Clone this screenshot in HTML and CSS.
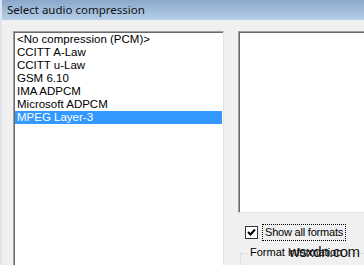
FILE: index.html
```html
<!DOCTYPE html>
<html lang="en">
<head>
  <meta charset="UTF-8">
  <title>Select audio compression</title>
  <link rel="stylesheet" href="styles.css">
</head>
<body>
  <div class="window">
    <div class="titlebar">Select audio compression</div>
    <div class="content">
      <ul class="codec-list">
        <li>&lt;No compression (PCM)&gt;</li>
        <li>CCITT A-Law</li>
        <li>CCITT u-Law</li>
        <li>GSM 6.10</li>
        <li>IMA ADPCM</li>
        <li>Microsoft ADPCM</li>
        <li class="selected">MPEG Layer-3</li>
      </ul>
      <div class="right-col">
        <div class="format-box"></div>
        <label class="check-row">
          <span class="checkbox">
            <svg width="9" height="9" viewBox="0 0 9 9"><path d="M1 4 L3.5 6.5 L8 1.5" fill="none" stroke="#000" stroke-width="2"/></svg>
          </span>
          <span class="check-label">Show all formats</span>
        </label>
        <div class="group">
          <span class="group-title">Format information</span>
        </div>
      </div>
    </div>
    <div class="watermark">wsxdn.com</div>
  </div>
</body>
</html>
```

FILE: styles.css
```css
body {
  margin: 0;
  background: #f0f0f0;
  font-family: "Liberation Sans", Arial, sans-serif;
  font-size: 11px;
  overflow: hidden;
}

.window {
  position: relative;
  width: 364px;
  height: 265px;
  border-left: 2px solid #dde4ec;
  box-sizing: border-box;
  overflow: hidden;
}

.titlebar {
  height: 20px;
  padding-left: 5px;
  line-height: 19px;
  font-family: "Noto Sans", sans-serif;
  font-size: 11.5px;
  color: #111;
  background: linear-gradient(#8ba8cb, #b6cfe9);
}

.content {
  display: flex;
  padding: 11px 0 0 11px;
  gap: 14px;
}

.codec-list {
  list-style: none;
  margin: 0;
  padding: 1px 1px 0 1px;
  width: 207px;
  height: 233px;
  background: #fff;
  border: 1px solid;
  border-bottom: none;
  border-color: #a0a0a0 #e3e3e3 #e3e3e3 #a0a0a0;
  box-shadow: inset 1px 1px #696969;
  color: #000;
  font-size: 11.5px;
}

.codec-list li {
  height: 13px;
  line-height: 13px;
  padding-left: 2px;
  white-space: nowrap;
}

.codec-list li.selected {
  background: #3399ff;
  color: #fff;
}

.right-col {
  flex: 1;
  display: flex;
  flex-direction: column;
}

.format-box {
  height: 180px;
  background: #fff;
  border: 1px solid;
  border-right: none;
  border-color: #a0a0a0 #e3e3e3 #e3e3e3 #a0a0a0;
  box-shadow: inset 1px 1px #696969;
}

.check-row {
  display: flex;
  align-items: center;
  gap: 4px;
  margin: 11px 0 0 7px;
}

.checkbox {
  width: 11px;
  height: 11px;
  border: 1px solid #333;
  background: #fff;
  display: flex;
  align-items: center;
  justify-content: center;
}

.check-label {
  font-size: 11px;
  letter-spacing: -0.2px;
  padding: 1px 2px;
  border: 1px dotted #000;
  line-height: 13px;
}

.group {
  margin: 12px 0 0 2px;
  height: 14px;
  border-top: 1px solid #d5dfe5;
  border-left: 1px solid #d5dfe5;
  position: relative;
}

.group-title {
  position: absolute;
  top: -8px;
  left: 7px;
  padding: 0 2px;
  background: #f0f0f0;
  font-size: 11px;
}

.watermark {
  position: absolute;
  left: 287px;
  top: 243px;
  font-family: "Liberation Sans", sans-serif;
  font-size: 15px;
  color: #111;
  letter-spacing: -0.5px;
}
```
